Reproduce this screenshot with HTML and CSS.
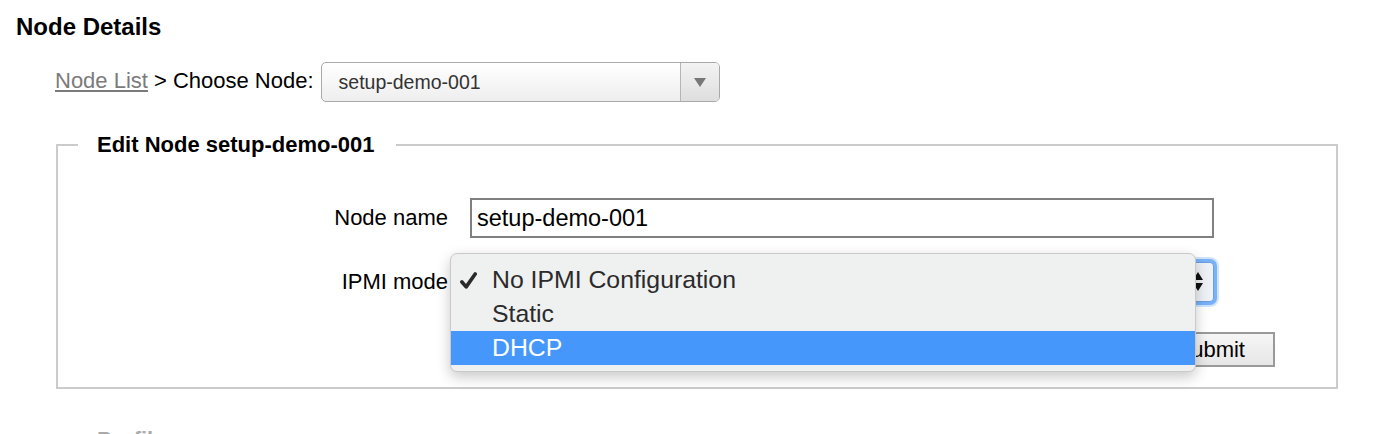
FILE: index.html
```html
<!DOCTYPE html>
<html>
<head>
<meta charset="utf-8">
<link rel="stylesheet" href="styles.css">
</head>
<body>
<h1 class="page-title">Node Details</h1>
<div class="crumbs">
  <a class="crumb-link" href="#">Node List</a>
  <span class="crumb-text">&gt; Choose Node:</span>
  <div class="node-select">
    <span class="node-select-value">setup-demo-001</span>
    <span class="node-select-arrow">
      <svg width="12" height="9" viewBox="0 0 12 9"><path d="M0 0H12L6 9Z" fill="#777"/></svg>
    </span>
  </div>
</div>

<fieldset class="panel">
  <legend class="panel-legend">Edit Node setup-demo-001</legend>
  <div class="form-grid">
    <label class="form-label">Node name</label>
    <div class="text-input">setup-demo-001</div>

    <label class="form-label">IPMI mode</label>
    <div class="ipmi-wrap">
      <div class="ipmi-select">
        <svg class="updown" width="10" height="19" viewBox="0 0 10 19"><path d="M5 0L10 8H0Z M0 11H10L5 19Z" fill="#111"/></svg>
      </div>
      <div class="menu">
        <div class="menu-item">
          <svg class="check" width="17" height="17" viewBox="0 0 16 16"><path d="M1.8 9.4L5.8 14L14.3 1.9" fill="none" stroke="#2a2a2a" stroke-width="3.4" stroke-linecap="round" stroke-linejoin="round"/></svg>
          <span>No IPMI Configuration</span>
        </div>
        <div class="menu-item"><span>Static</span></div>
        <div class="menu-item menu-item-active"><span>DHCP</span></div>
      </div>
    </div>
  </div>
  <div class="actions">
    <button class="submit-btn" type="button">Submit</button>
  </div>
</fieldset>

<fieldset class="panel panel-next">
  <legend class="panel-legend panel-legend-muted">Profiles</legend>
</fieldset>
</body>
</html>
```

FILE: styles.css
```css
html, body {
  margin: 0;
  padding: 0;
  background: #fff;
  overflow: hidden;
}
body {
  font-family: "Liberation Sans", Arial, sans-serif;
  color: #000;
  height: 434px;
}
.page-title {
  margin: 13px 0 0 16px;
  font-size: 24px;
  line-height: 28px;
  font-weight: bold;
}
.crumbs {
  display: flex;
  align-items: center;
  margin: 21px 0 0 55px;
  font-size: 22px;
  line-height: 24px;
  height: 40px;
}
.crumb-link {
  color: #7b7b7b;
  text-decoration: underline;
  text-underline-offset: 2px;
  margin-top: -2px;
}
.crumb-text {
  margin-left: 6px;
  margin-top: -2px;
}
.node-select {
  margin-left: 7px;
  width: 399px;
  height: 40px;
  box-sizing: border-box;
  border: 1px solid #a9a9a9;
  border-radius: 5px;
  background: linear-gradient(#ffffff, #eeeeee);
  display: flex;
  align-items: center;
}
.node-select-value {
  flex: 1;
  padding-left: 17px;
  font-size: 19.5px;
  color: #333;
}
.node-select-arrow {
  width: 38px;
  height: 100%;
  border-left: 1px solid #b5b5b5;
  display: flex;
  align-items: center;
  justify-content: center;
  background: linear-gradient(#f3f3f3, #dedede);
  border-radius: 0 4px 4px 0;
}
.panel {
  margin: 30px 38px 0 56px;
  padding: 0 0 20px 0;
  border: 2px solid #cbcbcb;
  min-inline-size: 0;
}
.panel-legend {
  margin-left: 20px;
  padding: 0 22px 0 19px;
  font-size: 22px;
  line-height: 26px;
  font-weight: bold;
}
.panel-legend-muted {
  color: #aaa;
}
.panel-next {
  margin-top: 38px;
  height: 60px;
}
.form-grid {
  display: grid;
  grid-template-columns: 390px 744px;
  column-gap: 22px;
  row-gap: 24px;
  align-items: center;
  padding-top: 40px;
}
.form-label {
  text-align: right;
  font-size: 22px;
}
.text-input {
  height: 40px;
  box-sizing: border-box;
  border: 2px solid #808080;
  padding-left: 5px;
  font-size: 23.5px;
  line-height: 36px;
  color: #000;
}
.ipmi-wrap {
  position: relative;
  height: 40px;
}
.ipmi-select {
  height: 40px;
  box-sizing: border-box;
  border: 1px solid #6a9fe0;
  border-radius: 4px;
  background: #eef1f5;
  box-shadow: 0 0 0 3px rgba(92, 160, 245, 0.75), 0 0 0 5px rgba(120, 180, 250, 0.35);
  position: relative;
}
.updown {
  position: absolute;
  right: 10px;
  top: 9px;
}
.menu {
  position: absolute;
  left: -20px;
  top: -9px;
  width: 746px;
  height: 119px;
  box-sizing: border-box;
  padding-top: 9px;
  background: #eff0f0;
  border: 1px solid #c9c9c9;
  border-radius: 7px;
  box-shadow: 0 5px 14px rgba(0, 0, 0, 0.22);
  z-index: 2;
}
.menu-item {
  position: relative;
  height: 34px;
  line-height: 34px;
  padding-left: 41px;
  font-size: 24.8px;
  color: #2b2b2b;
}
.menu-item-active {
  background: #4597fc;
  color: #fff;
}
.check {
  position: absolute;
  left: 9px;
  top: 9px;
}
.actions {
  display: flex;
  justify-content: flex-end;
  padding-right: 61px;
  margin-top: 30px;
}
.submit-btn {
  height: 35px;
  box-sizing: border-box;
  padding: 0 28px;
  border: 2px solid #9a9a9a;
  border-radius: 0;
  background: linear-gradient(#f6f6f6, #e6e6e6);
  font-family: "Liberation Sans", Arial, sans-serif;
  font-size: 22px;
  color: #000;
}
```
